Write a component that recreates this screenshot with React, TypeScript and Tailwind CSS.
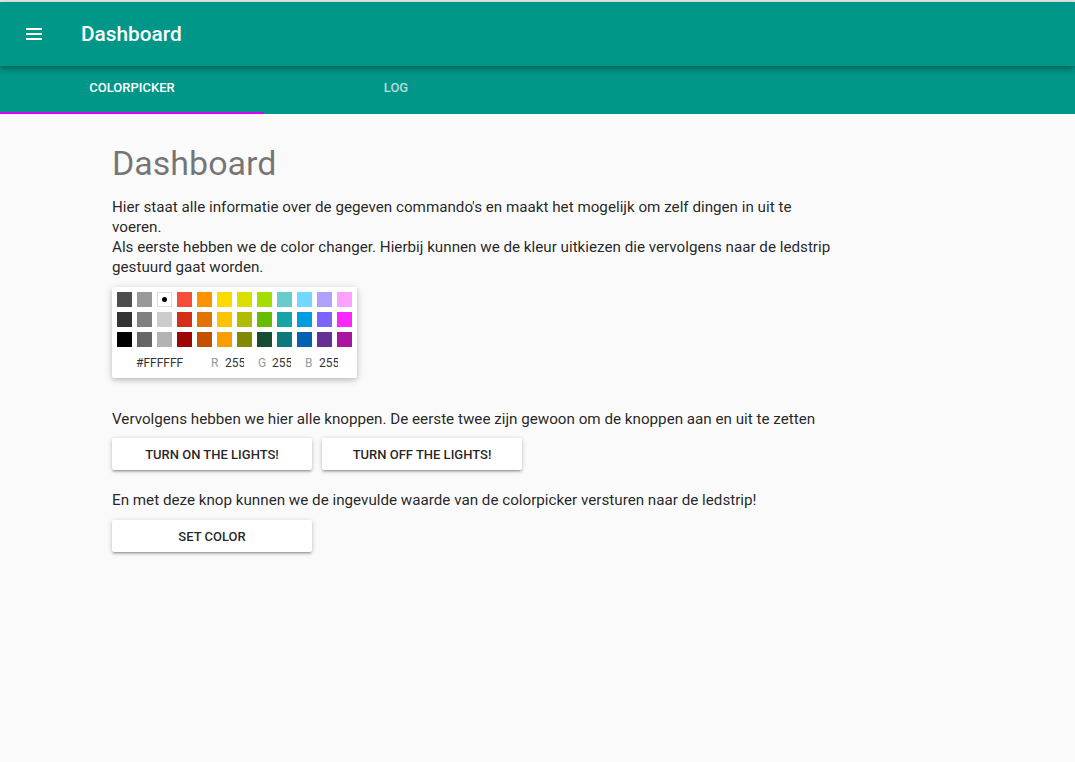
import React from "react";

const colors = [
  "#4D4D4D", "#999999", "#FFFFFF", "#F44E3B", "#FE9200", "#FCDC00", "#DBDF00", "#A4DD00", "#68CCCA", "#73D8FF", "#AEA1FF", "#FDA1FF",
  "#333333", "#808080", "#CCCCCC", "#D33115", "#E27300", "#FCC400", "#B0BC00", "#68BC00", "#16A5A5", "#009CE0", "#7B64FF", "#FA28FF",
  "#000000", "#666666", "#B3B3B3", "#9F0500", "#C45100", "#FB9E00", "#808900", "#194D33", "#0C797D", "#0062B1", "#653294", "#AB149E",
];

function Swatch({ c }: { c: string }) {
  const white = c === "#FFFFFF";
  return (
    <div
      className={`relative w-[15px] h-[15px] mr-[5px] mb-[5px] flex items-center justify-center ${white ? "shadow-[inset_0_0_0_1px_#ddd]" : ""}`}
      style={{ backgroundColor: c }}
    >
      {white && <div className="w-[5px] h-[5px] rounded-full bg-black" />}
    </div>
  );
}

function Field({ label, value }: { label: string; value: string }) {
  return (
    <div className="flex items-center w-[47px]">
      <span className="w-[14px] text-[#999999]">{label}</span>
      <span className="w-[19px] overflow-hidden whitespace-nowrap text-[#333333]">{value}</span>
    </div>
  );
}

function Btn({ children }: { children: React.ReactNode }) {
  return (
    <button className="w-[200px] h-[32px] pt-[2px] bg-white rounded-[2px] text-[13px] font-medium uppercase text-[#000000de] shadow-[0px_1px_5px_0px_rgba(0,0,0,0.2),0px_2px_2px_0px_rgba(0,0,0,0.14),0px_3px_1px_-2px_rgba(0,0,0,0.12)]">
      {children}
    </button>
  );
}

export default function App() {
  return (
    <div className="min-h-screen bg-[#fafafa] font-['Roboto',sans-serif]">
      <div className="h-[2px] bg-[#e6e6e6]" />
      <header className="relative z-10 h-16 bg-[#009688] flex items-center shadow-[0px_2px_4px_-1px_rgba(0,0,0,0.2),0px_4px_5px_0px_rgba(0,0,0,0.14),0px_1px_10px_0px_rgba(0,0,0,0.12)]">
        <svg width="16" height="12" viewBox="0 0 16 12" className="ml-[26px]">
          <rect x="0" y="0" width="16" height="2" fill="white" />
          <rect x="0" y="5" width="16" height="2" fill="white" />
          <rect x="0" y="10" width="16" height="2" fill="white" />
        </svg>
        <h1 className="ml-[39px] pt-[2px] text-white text-[20.8px] font-medium">Dashboard</h1>
      </header>
      <nav className="h-12 bg-[#009688] flex">
        <div className="relative w-[264px] flex items-center justify-center pb-[5px] text-[13px] font-medium text-white uppercase">
          Colorpicker
          <div className="absolute left-0 right-0 bottom-0 h-[2px] bg-[#d500f9]" />
        </div>
        <div className="w-[264px] flex items-center justify-center pb-[5px] text-[13px] font-medium text-white/70 uppercase">
          Log
        </div>
      </nav>
      <main className="pl-[112px] pt-[29px] w-[838px]">
        <h2 className="text-[34px] leading-[40px] text-[#0000008a]">Dashboard</h2>
        <div className="mt-[14px] text-[15.2px] leading-[20px] text-[#000000de]">
          <p>Hier staat alle informatie over de gegeven commando's en maakt het mogelijk om zelf dingen in uit te voeren.</p>
          <p>Als eerste hebben we de color changer. Hierbij kunnen we de kleur uitkiezen die vervolgens naar de ledstrip gestuurd gaat worden.</p>
        </div>
        <div className="mt-[10px] w-[245px] h-[91px] bg-white rounded-[2px] pt-[5px] pl-[5px] shadow-[0_2px_10px_rgba(0,0,0,0.12),0_2px_5px_rgba(0,0,0,0.16)]">
          <div className="flex flex-wrap w-[240px]">
            {colors.map((c, i) => (
              <Swatch key={i} c={c} />
            ))}
          </div>
          <div className="flex items-center h-[20px] pl-[19px] text-[12px] mt-[1px]">
            <span className="w-[75px] text-[#333333]">#FFFFFF</span>
            <Field label="R" value="255" />
            <Field label="G" value="255" />
            <Field label="B" value="255" />
          </div>
        </div>
        <p className="mt-[31px] text-[15.2px] leading-[20px] text-[#000000de]">
          Vervolgens hebben we hier alle knoppen. De eerste twee zijn gewoon om de knoppen aan en uit te zetten
        </p>
        <div className="mt-[9px] flex gap-[10px]">
          <Btn>Turn on the lights!</Btn>
          <Btn>Turn off the lights!</Btn>
        </div>
        <p className="mt-[20px] text-[15.2px] leading-[20px] text-[#000000de]">
          En met deze knop kunnen we de ingevulde waarde van de colorpicker versturen naar de ledstrip!
        </p>
        <div className="mt-[10px]">
          <Btn>Set color</Btn>
        </div>
      </main>
    </div>
  );
}
